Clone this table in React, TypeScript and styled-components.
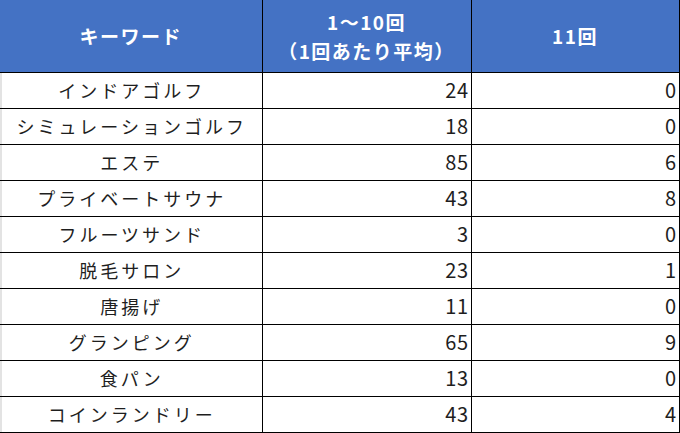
import React from 'react';
import styled, {createGlobalStyle} from 'styled-components';

const GlobalStyle = createGlobalStyle`
  html, body {
    margin: 0;
    padding: 0;
    background: #ffffff;
  }
  body {
    font-family: "Noto Sans CJK JP", "Noto Sans", sans-serif;
  }
`;

const Page = styled.div`
  width: 680px;
  height: 433px;
  overflow: hidden;
  background: #ffffff;
`;

const Table = styled.table`
  border-collapse: collapse;
  table-layout: fixed;
  width: 679px;
`;

const HeadCell = styled.th`
  height: 72px;
  padding: 0;
  background: #4472c4;
  color: #ffffff;
  font-weight: 700;
  font-size: 19px;
  letter-spacing: 1.5px;
  line-height: 29px;
  text-align: center;
  border-right: 1px solid #000000;
  border-bottom: 1px solid #000000;
  box-sizing: border-box;
`;

const Row = styled.tr`
  height: 36px;
`;

const Cell = styled.td<{ $num?: boolean }>`
  padding: ${({$num}) => ($num ? '0 2px 0 0' : '0 0 0 2px')};
  height: 36px;
  box-sizing: border-box;
  border-right: 1px solid #000000;
  border-bottom: 1px solid #000000;
  color: #1e1e1e;
  text-align: ${({$num}) => ($num ? 'right' : 'center')};
  font-size: ${({$num}) => ($num ? '20px' : '18px')};
  letter-spacing: ${({$num}) => ($num ? '0.5px' : '3px')};
  line-height: 34px;
  white-space: nowrap;
  /* the thin grey gutter along the left edge of the data rows */
  box-shadow: ${({$num}) => ($num ? 'none' : 'inset 2px 0 0 #e3e3e3')};
`;

const rows: [string, number, number][] = [
    ['インドアゴルフ', 24, 0],
    ['シミュレーションゴルフ', 18, 0],
    ['エステ', 85, 6],
    ['プライベートサウナ', 43, 8],
    ['フルーツサンド', 3, 0],
    ['脱毛サロン', 23, 1],
    ['唐揚げ', 11, 0],
    ['グランピング', 65, 9],
    ['食パン', 13, 0],
    ['コインランドリー', 43, 4],
];

export default function App() {
    return (
        <>
            <GlobalStyle/>
            <Page>
                <Table>
                    <colgroup>
                        <col style={{width: 262}}/>
                        <col style={{width: 209}}/>
                        <col style={{width: 208}}/>
                    </colgroup>
                    <thead>
                    <tr>
                        <HeadCell>キーワード</HeadCell>
                        <HeadCell>1～10回<br/>（1回あたり平均）</HeadCell>
                        <HeadCell>11回</HeadCell>
                    </tr>
                    </thead>
                    <tbody>
                    {rows.map(([kw, a, b]) => (
                        <Row key={kw}>
                            <Cell>{kw}</Cell>
                            <Cell $num>{a}</Cell>
                            <Cell $num>{b}</Cell>
                        </Row>
                    ))}
                    </tbody>
                </Table>
            </Page>
        </>
    );
}
